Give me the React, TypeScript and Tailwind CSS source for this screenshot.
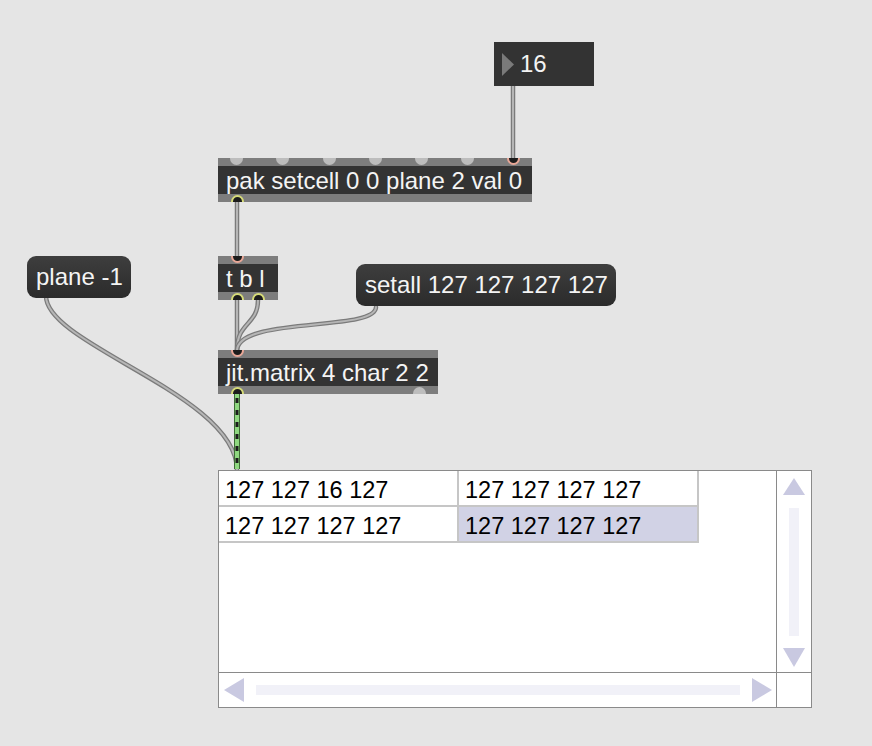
import React from "react";

type Port = { x: number; kind: "off" | "in" | "out" };

function Ports({ ports, side }: { ports: Port[]; side: "top" | "bottom" }) {
  return (
    <>
      {ports.map((p, i) => {
        const ring =
          p.kind === "in"
            ? "border-[#e9a797] bg-[#1c1c1c]"
            : p.kind === "out"
            ? "border-[#d6db78] bg-[#1c1c1c]"
            : "border-[#bdbdbd] bg-[#bdbdbd]";
        return (
          <div
            key={i}
            className={`absolute w-[13px] h-[13px] rounded-full border-2 ${ring} ${
              side === "top" ? "top-[-6px]" : "bottom-[-6px]"
            }`}
            style={{ left: p.x - 6.5 }}
          />
        );
      })}
    </>
  );
}

function ObjBox({
  left,
  top,
  width,
  text,
  inlets,
  outlets,
}: {
  left: number;
  top: number;
  width: number;
  text: string;
  inlets: Port[];
  outlets: Port[];
}) {
  return (
    <div
      className="absolute overflow-hidden flex flex-col h-[44px] bg-[#7d7d7d]"
      style={{ left, top, width }}
    >
      <div className="h-[8px]" />
      <div className="h-[28px] bg-[#333333] text-[#f4f4f4] text-[24px] leading-[29px] pl-[8px] whitespace-nowrap">
        {text}
      </div>
      <div className="h-[8px]" />
      <Ports ports={inlets} side="top" />
      <Ports ports={outlets} side="bottom" />
    </div>
  );
}

function MsgBox({
  left,
  top,
  width,
  text,
}: {
  left: number;
  top: number;
  width: number;
  text: string;
}) {
  return (
    <div
      className="absolute h-[42px] rounded-[9px] bg-gradient-to-b from-[#3e3e3e] to-[#2b2b2b] text-[#f4f4f4] text-[24px] leading-[42px] pl-[9px] whitespace-nowrap"
      style={{ left, top, width }}
    >
      {text}
    </div>
  );
}

function Cord({ d }: { d: string }) {
  return (
    <>
      <path d={d} fill="none" stroke="#7b7b7b" strokeWidth={4.5} strokeLinecap="round" />
      <path d={d} fill="none" stroke="#b6b6b6" strokeWidth={2} strokeLinecap="round" />
    </>
  );
}

function Tri({ dir, w, h }: { dir: "up" | "down" | "left" | "right"; w: number; h: number }) {
  const pts =
    dir === "up"
      ? `${w / 2},0 ${w},${h} 0,${h}`
      : dir === "down"
      ? `0,0 ${w},0 ${w / 2},${h}`
      : dir === "left"
      ? `${w},0 ${w},${h} 0,${h / 2}`
      : `0,0 ${w},${h / 2} 0,${h}`;
  return (
    <svg width={w} height={h} className="shrink-0">
      <polygon points={pts} fill="#c9c9e1" />
    </svg>
  );
}

const cells = [
  ["127 127 16 127", "127 127 127 127"],
  ["127 127 127 127", "127 127 127 127"],
];

export default function App() {
  return (
    <div className="relative w-[872px] h-[746px] bg-[#e5e5e5] overflow-hidden font-['Liberation_Sans',Arial,sans-serif]">
      <svg className="absolute left-0 top-0" width={872} height={746}>
        <Cord d="M513 86 L513 158" />
        <Cord d="M237 202 L237 256" />
        <Cord d="M237 300 L237 350" />
        <Cord d="M258 300 C258 325 237 322 237 350" />
        <Cord d="M376 307 C376 332 240 316 237 350" />
        <Cord d="M46 296 C46 345 237 395 237 470" />
        <path d="M237 394 L237 469" stroke="#3d6b34" strokeWidth={6} fill="none" />
        <path d="M237 394 L237 469" stroke="#8fd880" strokeWidth={4} fill="none" />
        <path d="M237 398 L237 469" stroke="#1d1d1d" strokeWidth={3} strokeDasharray="5 7" fill="none" />
      </svg>

      {/* number box */}
      <div className="absolute left-[494px] top-[42px] w-[100px] h-[44px] bg-[#333333] flex items-center">
        <svg width={12} height={23} className="ml-[8px]">
          <polygon points="0,0 12,11.5 0,23" fill="#7a7a7a" />
        </svg>
        <span className="ml-[6px] text-[#f4f4f4] text-[24px] leading-none">16</span>
      </div>

      <ObjBox
        left={218}
        top={158}
        width={314}
        text="pak setcell 0 0 plane 2 val 0"
        inlets={[
          { x: 18.5, kind: "off" },
          { x: 64.5, kind: "off" },
          { x: 111, kind: "off" },
          { x: 157, kind: "off" },
          { x: 203, kind: "off" },
          { x: 249, kind: "off" },
          { x: 295, kind: "in" },
        ]}
        outlets={[{ x: 19, kind: "out" }]}
      />

      <ObjBox
        left={218}
        top={256}
        width={60}
        text="t b l"
        inlets={[{ x: 19, kind: "in" }]}
        outlets={[
          { x: 19, kind: "out" },
          { x: 40, kind: "out" },
        ]}
      />

      <MsgBox left={27} top={256} width={104} text="plane -1" />
      <MsgBox left={356} top={264} width={260} text="setall 127 127 127 127" />

      <ObjBox
        left={218}
        top={350}
        width={220}
        text="jit.matrix 4 char 2 2"
        inlets={[{ x: 19, kind: "in" }]}
        outlets={[
          { x: 19, kind: "out" },
          { x: 201, kind: "off" },
        ]}
      />

      {/* cellblock */}
      <div className="absolute left-[218px] top-[470px] w-[594px] h-[238px] border border-[#8a8a8a] bg-white flex flex-col">
        <div className="flex flex-1 min-h-0">
          <div className="flex-1 flex flex-col">
            {cells.map((row, r) => (
              <div key={r} className="flex h-[36px]">
                {row.map((c, ci) => (
                  <div
                    key={ci}
                    className={`w-[240px] h-[36px] border-r-2 border-b-2 border-[#c6c6c6] pl-[6px] text-[23.5px] leading-[38px] text-black whitespace-nowrap ${
                      r === 1 && ci === 1 ? "bg-[#d1d2e5]" : "bg-white"
                    }`}
                  >
                    {c}
                  </div>
                ))}
              </div>
            ))}
          </div>
          <div className="w-[35px] border-l border-[#8a8a8a] flex flex-col items-center pt-[7px] pb-[5px]">
            <Tri dir="up" w={22} h={17} />
            <div className="w-[10px] flex-1 bg-[#f1f1f8] mt-[13px] mb-[12px]" />
            <Tri dir="down" w={22} h={19} />
          </div>
        </div>
        <div className="flex h-[35px] border-t border-[#8a8a8a]">
          <div className="flex-1 flex items-center pl-[5px] pr-[4px]">
            <Tri dir="left" w={20} h={24} />
            <div className="flex-1 h-[10px] bg-[#f1f1f8] ml-[12px] mr-[12px]" />
            <Tri dir="right" w={20} h={24} />
          </div>
          <div className="w-[35px] border-l border-[#8a8a8a]" />
        </div>
      </div>
    </div>
  );
}
